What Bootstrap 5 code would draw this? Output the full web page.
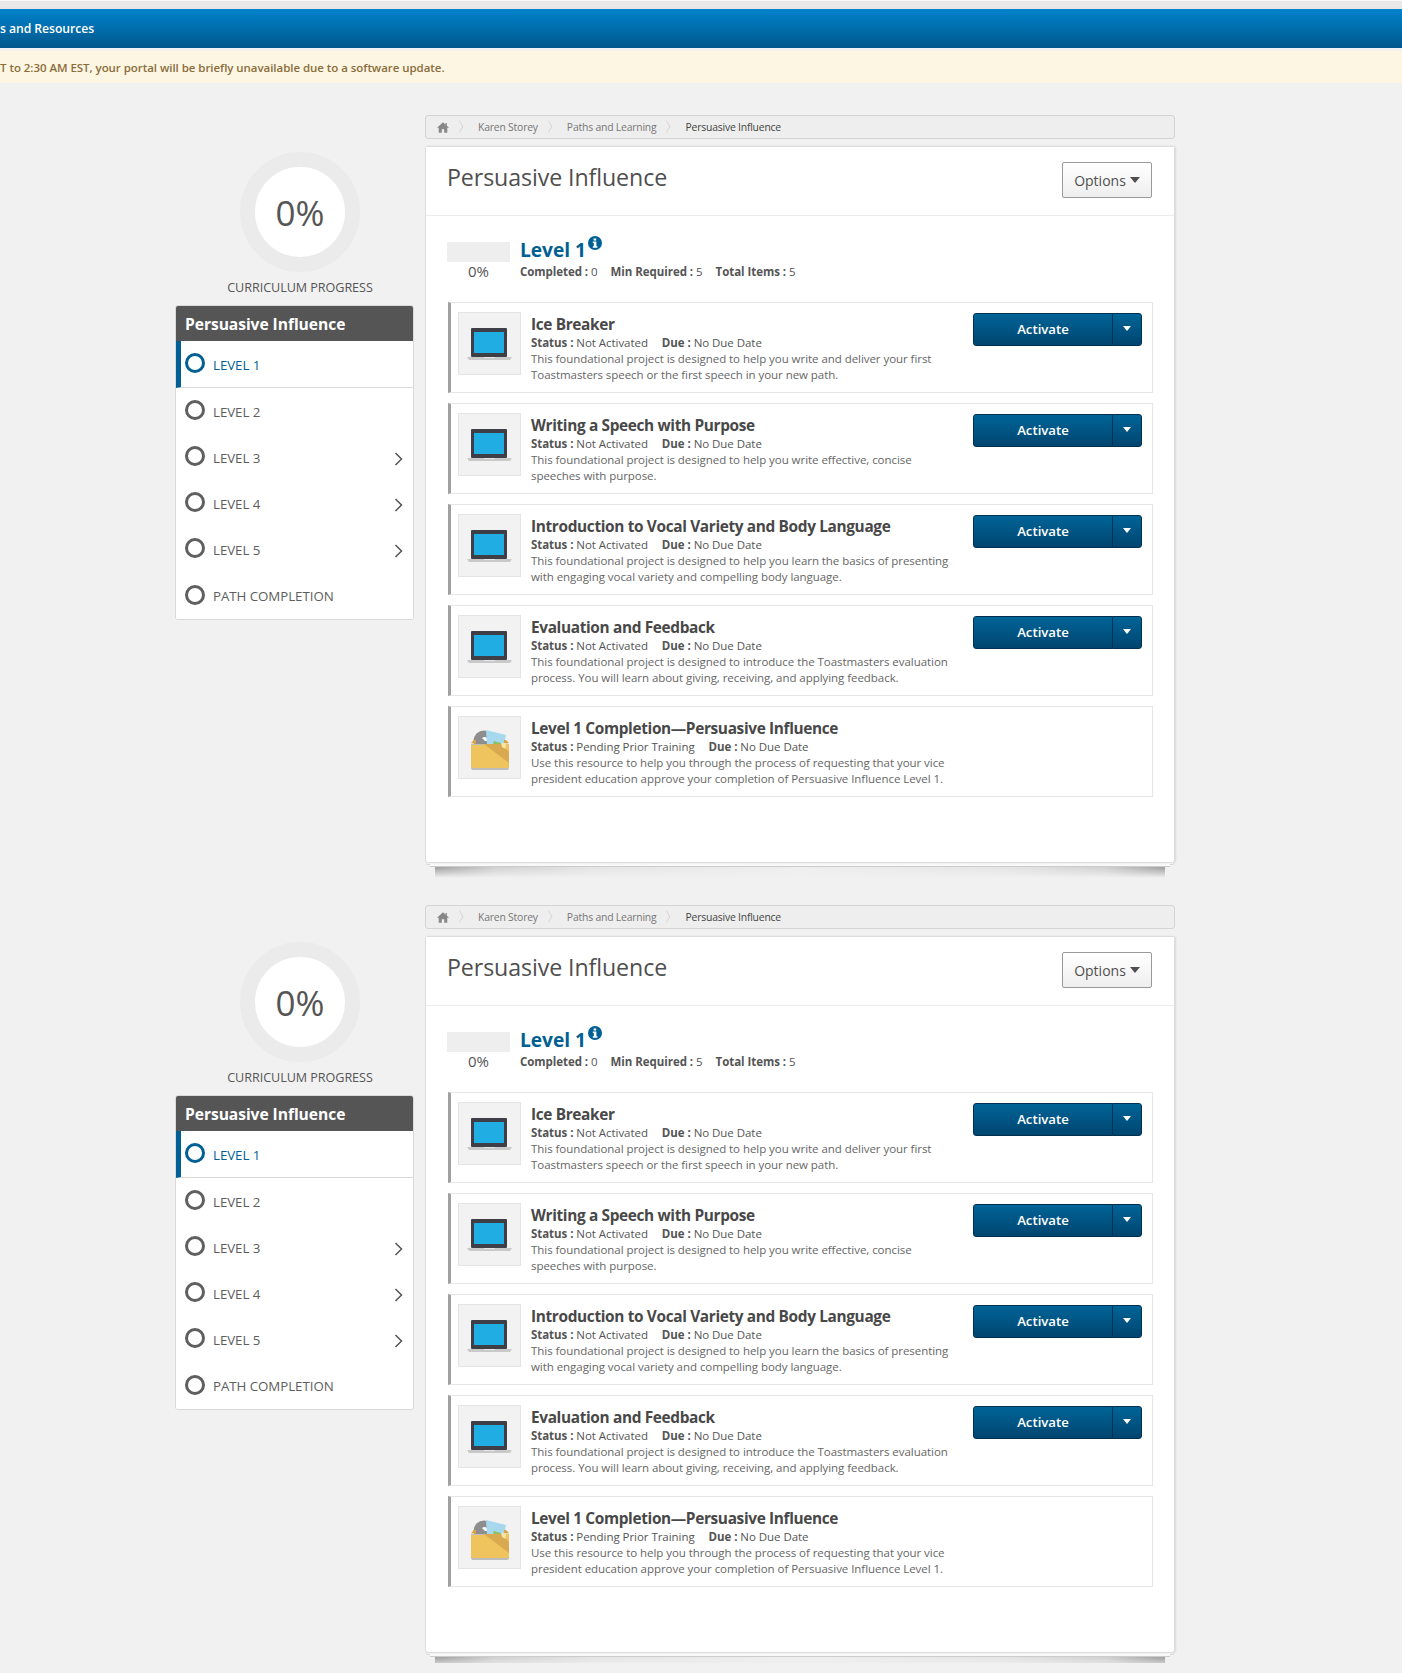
<!DOCTYPE html>
<html lang="en">
<head>
    <meta charset="UTF-8">
    <meta name="viewport" content="width=device-width, initial-scale=1.0">
    <title>Persuasive Influence</title>
    <link href="https://cdn.jsdelivr.net/npm/bootstrap@5.3.1/dist/css/bootstrap.min.css" rel="stylesheet">
    <style>
        body {
            background-color: #f1f1f1;
            color: #555555;
            font-family: "Open Sans", "Liberation Sans", sans-serif;
            font-size: 11.5px;
            letter-spacing: -.05px;
            overflow-x: hidden;
        }

        /* Top bars */
        .top-strip { height: 9px; background-color: #e8e8e8; border-top: 1px solid #f8f8f8; }
        .site-bar {
            height: 39px;
            margin-bottom: 3px;
            background: linear-gradient(#0083cc, #00578c);
            color: #ffffff;
            font-size: 12.2px;
            font-weight: 600;
            line-height: 39px;
        }
        .notice-bar {
            height: 32px;
            background-color: #fdf6e3;
            color: #8a6d3b;
            font-size: 11.5px;
            font-weight: 600;
            line-height: 33px;
        }

        /* Page blocks */
        .page-block { height: 790px; padding: 32px 0 0 175px; }
        .side-col { width: 250px; padding-top: 37px; flex: none; }
        .main-col { width: 750px; flex: none; }

        /* Progress ring */
        .ring {
            width: 120px;
            height: 120px;
            padding-top: 3px;
            border: 15px solid #ebebeb;
            border-radius: 50%;
            background-color: #ffffff;
            color: #555555;
            font-size: 35px;
        }
        .ring-label { margin: 7px 0 8px; font-size: 12.6px; color: #555555; line-height: 18px; }

        /* Side menu */
        .side-menu {
            width: 239px;
            border: 1px solid #d9d9d9;
            border-radius: 3px;
            background-color: #ffffff;
            overflow: hidden;
        }
        .side-head {
            height: 35px;
            padding-left: 9px;
            background-color: #555555;
            color: #ffffff;
            font-size: 15.6px;
            font-weight: 700;
            line-height: 36px;
        }
        .side-row {
            height: 46px;
            padding: 3px 10px 0 9px;
            border: 0;
            color: #5d5d5d;
            font-size: 13.3px;
        }
        .side-row:last-child { height: 47px; }
        .side-row.current {
            height: 47px;
            padding-left: 4px;
            border-left: 5px solid #005f94;
            border-bottom: 1px solid #d9d9d9;
            color: #005f94;
        }
        .side-dot {
            width: 20px;
            height: 20px;
            margin: 0 8px 5px 0;
            border: 3px solid #5f5f5f;
            border-radius: 50%;
        }
        .current .side-dot { border-color: #005f94; }

        /* Breadcrumb */
        .crumbs {
            height: 24px;
            margin: 0 0 7px;
            padding: 1px 11px 0;
            align-items: center;
            background-color: #eeeeee;
            border: 1px solid #d4d4d4;
            border-radius: 3px;
            font-size: 10.4px;
            letter-spacing: -.2px;
        }
        .crumbs .breadcrumb-item { color: #777777; padding-left: 0; }
        .crumbs .breadcrumb-item + .breadcrumb-item::before { display: none; }
        .crumbs .breadcrumb-item::after {
            content: "";
            display: inline-block;
            width: 9px;
            height: 9px;
            margin: 0 14px 0 6px;
            border-top: 1px solid #cfcfcf;
            border-right: 1px solid #cfcfcf;
            transform: scaleX(.6) rotate(45deg);
        }
        .crumbs .breadcrumb-item.active { color: #444444; }
        .crumbs .breadcrumb-item.active::after { display: none; }

        /* Main card and the paper stack under it */
        .path-card {
            position: relative;
            border: 1px solid #dddddd;
            border-radius: 3px;
            box-shadow: 1px 0 2px rgba(0, 0, 0, .1), 0 2px 0 -1px #f8f8f8, 0 3px 0 -1px #d6d6d6;
        }
        .path-card::before {
            content: "";
            position: absolute;
            left: 4px;
            right: 4px;
            top: calc(100% + 2px);
            height: 3px;
            background-color: #f8f8f8;
            border-bottom: 1px solid #cccccc;
        }
        .path-card::after {
            content: "";
            position: absolute;
            left: 9px;
            right: 9px;
            top: calc(100% + 5px);
            height: 11px;
            background: linear-gradient(90deg, #9c9c9c, #cfcfcf 8%, #e4e4e4 22%, #eeeeee 50%, #e4e4e4 78%, #cfcfcf 92%, #9c9c9c);
            -webkit-mask-image: linear-gradient(#000000, transparent);
            mask-image: linear-gradient(#000000, transparent);
        }
        .path-head {
            height: 69px;
            padding: 0 22px 0 21px;
            background-color: #ffffff;
            border-bottom: 1px solid #ececec;
        }
        .path-title { margin: 0 0 7px; font-size: 23.2px; font-weight: 400; color: #4f4f4f; letter-spacing: -.1px; }
        .options-btn {
            width: 90px;
            height: 36px;
            margin-bottom: 2px;
            padding: 0;
            background: linear-gradient(#ffffff, #eeeeee);
            border: 1px solid #999999;
            border-radius: 2px;
            color: #4f4f4f;
            font-size: 14px;
        }
        .options-btn::after { border-width: 6px 5px 0; vertical-align: 3px; margin-left: 4px; }
        .path-body { padding: 16px 21px 65px; }

        .level-row { height: 49px; margin-bottom: 21px; }
        .level-meter { width: 63px; margin-top: 10px; text-align: center; font-size: 15px; line-height: 19px; }
        .level-meter span { display: block; height: 20px; background-color: #eeeeee; }
        .level-title { margin: 0; font-size: 19.2px; font-weight: 700; color: #005f94; line-height: 24px; }
        .level-title svg { margin-left: -3px; vertical-align: 7px; }
        .level-info { margin-left: 10px; padding-top: 4px; }
        .level-stats { margin-top: 1px; font-size: 11.5px; line-height: 18px; }
        .level-stats b, .item-meta b { font-weight: 700; }
        .level-stats span { margin-right: 13px; }
        .item-meta span { margin-right: 11px; }

        /* Learning items */
        .path-item {
            height: 91px;
            margin: 0 0 10px 1px;
            padding: 9px 10px 0 7px;
            background-color: #ffffff;
            border: 1px solid #e6e6e6;
            border-left: 3px solid #a0a0a0;
        }
        .path-item:last-child { margin-bottom: 0; }
        .item-thumb {
            width: 63px;
            height: 63px;
            background-color: #f2f2f2;
            border: 1px solid #e4e4e4;
            flex: none;
        }
        .item-text { width: 420px; margin: 0 22px 0 10px; flex: none; color: #666666; line-height: 16px; }
        .item-title { margin: 3px 0 1px; font-size: 15.4px; font-weight: 700; color: #484848; line-height: 19px; letter-spacing: -.35px; white-space: nowrap; }
        .item-meta { color: #555555; }
        .activate-group { width: 169px; height: 33px; margin-top: 1px; }
        .activate-btn, .activate-caret {
            padding: 1px 0 0;
            background: linear-gradient(#006497, #004570);
            border: 1px solid #00304f;
            border-radius: 3px;
            color: #ffffff;
            font-size: 13.2px;
            font-weight: 600;
        }
        .activate-caret { width: 30px; flex: none !important; }
        .activate-caret::after { border-width: 5px 4.5px 0; vertical-align: 3px; }
    </style>
</head>
<body>
    <svg width="0" height="0" class="position-absolute">
        <symbol id="homeIcon" viewBox="0 0 14 12">
            <path d="M7 0 0 6.200h2V12h3.600V8h2.800v4H12V6.200h2L11.500 4V.8H10v1.900z" fill="#888888"/>
        </symbol>
        <symbol id="infoIcon" viewBox="0 0 14 14">
            <circle cx="7" cy="7" r="7" fill="#005f94"/>
            <path d="M5.600 2.400h2.600v2.200H5.600zM4.800 5.600h3.600v4.600h1v1.500H4.800v-1.500h1V7.100h-1z" fill="#ffffff"/>
        </symbol>
        <symbol id="laptopIcon" viewBox="0 0 45 32">
            <path d="M0 29h45l-2 3H2z" fill="#c9c9c9"/>
            <path d="M17 29h11v1H17z" fill="#e6e6e6"/>
            <rect x="4" y="0" width="36" height="29" rx="1" fill="#3e3e46"/>
            <rect x="7" y="4" width="30" height="21" fill="#1fade3"/>
        </symbol>
        <symbol id="folderIcon" viewBox="0 0 38 44">
            <circle cx="13" cy="15" r="10.500" fill="#8e8e8e"/>
            <path d="M13 11a4 4 0 0 1 4 4h-3l-3-3z" fill="#ffffff"/>
            <path d="M15 4 35 9l-3 14-16-4z" fill="#a7d8ee"/>
            <path d="M23 15l10 3-2 7-10-3z" fill="#8cc063"/>
            <path d="M0 17 3 14h2v4zM38 17l-3-3h-2v4z" fill="#d9a441"/>
            <path d="M0 18h38v24a2 2 0 0 1-2 2H2a2 2 0 0 1-2-2z" fill="#bdbdbd"/>
            <path d="M0 19h12l1-1h25v22a2 2 0 0 1-2 2H2a2 2 0 0 1-2-2z" fill="#efc45e"/>
            <path d="M13 18 38 37V26l-7-8z" fill="#d8a94e"/>
            <path d="M30 17h5l-.5 6-3.500-2z" fill="#f6e3a6"/>
        </symbol>
        <symbol id="chevIcon" viewBox="0 0 9 14">
            <path d="M1.500 1 7.500 7l-6 6" fill="none" stroke="#555555" stroke-width="1.500"/>
        </symbol>
    </svg>

    <div class="top-strip"></div>
    <div class="site-bar">s and Resources</div>
    <div class="notice-bar">T to 2:30 AM EST, your portal will be briefly unavailable due to a software update.</div>

    <section class="page-block d-flex">
        <aside class="side-col">
            <div class="text-center">
                <div class="ring d-flex align-items-center justify-content-center mx-auto">0%</div>
                <div class="ring-label">CURRICULUM PROGRESS</div>
            </div>
            <div class="side-menu">
                <div class="side-head">Persuasive Influence</div>
                <div class="list-group list-group-flush">
                    <div class="list-group-item side-row current d-flex align-items-center"><i class="side-dot"></i>LEVEL 1</div>
                    <div class="list-group-item side-row d-flex align-items-center"><i class="side-dot"></i>LEVEL 2</div>
                    <div class="list-group-item side-row d-flex align-items-center"><i class="side-dot"></i>LEVEL 3<svg class="ms-auto" width="9" height="14"><use href="#chevIcon"/></svg></div>
                    <div class="list-group-item side-row d-flex align-items-center"><i class="side-dot"></i>LEVEL 4<svg class="ms-auto" width="9" height="14"><use href="#chevIcon"/></svg></div>
                    <div class="list-group-item side-row d-flex align-items-center"><i class="side-dot"></i>LEVEL 5<svg class="ms-auto" width="9" height="14"><use href="#chevIcon"/></svg></div>
                    <div class="list-group-item side-row d-flex align-items-center"><i class="side-dot"></i>PATH COMPLETION</div>
                </div>
            </div>
        </aside>
        <main class="main-col">
            <ol class="breadcrumb crumbs">
                <li class="breadcrumb-item"><svg width="12" height="11"><use href="#homeIcon"/></svg></li>
                <li class="breadcrumb-item">Karen Storey</li>
                <li class="breadcrumb-item">Paths and Learning</li>
                <li class="breadcrumb-item active">Persuasive Influence</li>
            </ol>
            <div class="card path-card">
                <div class="path-head d-flex align-items-center justify-content-between">
                    <h1 class="path-title">Persuasive Influence</h1>
                    <button class="btn options-btn dropdown-toggle" type="button">Options</button>
                </div>
                <div class="path-body">
                    <div class="d-flex level-row">
                        <div class="level-meter"><span></span>0%</div>
                        <div class="level-info">
                            <h2 class="level-title">Level 1 <svg width="14" height="14"><use href="#infoIcon"/></svg></h2>
                            <div class="level-stats"><span><b>Completed :</b> 0</span><span><b>Min Required :</b> 5</span><span><b>Total Items :</b> 5</span></div>
                        </div>
                    </div>
                    <div class="path-item d-flex">
                        <div class="item-thumb d-flex align-items-center justify-content-center"><svg width="45" height="32"><use href="#laptopIcon"/></svg></div>
                        <div class="item-text">
                            <div class="item-title">Ice Breaker</div>
                            <div class="item-meta"><span><b>Status :</b> Not Activated</span> <span><b>Due :</b> No Due Date</span></div>
                            This foundational project is designed to help you write and deliver your first Toastmasters speech or the first speech in your new path.
                        </div>
                        <div class="btn-group activate-group">
                            <button class="btn activate-btn" type="button">Activate</button>
                            <button class="btn activate-caret dropdown-toggle dropdown-toggle-split" type="button"></button>
                        </div>
                    </div>
                    <div class="path-item d-flex">
                        <div class="item-thumb d-flex align-items-center justify-content-center"><svg width="45" height="32"><use href="#laptopIcon"/></svg></div>
                        <div class="item-text">
                            <div class="item-title">Writing a Speech with Purpose</div>
                            <div class="item-meta"><span><b>Status :</b> Not Activated</span> <span><b>Due :</b> No Due Date</span></div>
                            This foundational project is designed to help you write effective, concise speeches with purpose.
                        </div>
                        <div class="btn-group activate-group">
                            <button class="btn activate-btn" type="button">Activate</button>
                            <button class="btn activate-caret dropdown-toggle dropdown-toggle-split" type="button"></button>
                        </div>
                    </div>
                    <div class="path-item d-flex">
                        <div class="item-thumb d-flex align-items-center justify-content-center"><svg width="45" height="32"><use href="#laptopIcon"/></svg></div>
                        <div class="item-text">
                            <div class="item-title">Introduction to Vocal Variety and Body Language</div>
                            <div class="item-meta"><span><b>Status :</b> Not Activated</span> <span><b>Due :</b> No Due Date</span></div>
                            This foundational project is designed to help you learn the basics of presenting with engaging vocal variety and compelling body language.
                        </div>
                        <div class="btn-group activate-group">
                            <button class="btn activate-btn" type="button">Activate</button>
                            <button class="btn activate-caret dropdown-toggle dropdown-toggle-split" type="button"></button>
                        </div>
                    </div>
                    <div class="path-item d-flex">
                        <div class="item-thumb d-flex align-items-center justify-content-center"><svg width="45" height="32"><use href="#laptopIcon"/></svg></div>
                        <div class="item-text">
                            <div class="item-title">Evaluation and Feedback</div>
                            <div class="item-meta"><span><b>Status :</b> Not Activated</span> <span><b>Due :</b> No Due Date</span></div>
                            This foundational project is designed to introduce the Toastmasters evaluation process. You will learn about giving, receiving, and applying feedback.
                        </div>
                        <div class="btn-group activate-group">
                            <button class="btn activate-btn" type="button">Activate</button>
                            <button class="btn activate-caret dropdown-toggle dropdown-toggle-split" type="button"></button>
                        </div>
                    </div>
                    <div class="path-item d-flex">
                        <div class="item-thumb d-flex align-items-center justify-content-center"><svg width="38" height="44"><use href="#folderIcon"/></svg></div>
                        <div class="item-text">
                            <div class="item-title">Level 1 Completion—Persuasive Influence</div>
                            <div class="item-meta"><span><b>Status :</b> Pending Prior Training</span> <span><b>Due :</b> No Due Date</span></div>
                            Use this resource to help you through the process of requesting that your vice president education approve your completion of Persuasive Influence Level 1.
                        </div>
                    </div>
                </div>
            </div>
        </main>
    </section>

    <section class="page-block d-flex">
        <aside class="side-col">
            <div class="text-center">
                <div class="ring d-flex align-items-center justify-content-center mx-auto">0%</div>
                <div class="ring-label">CURRICULUM PROGRESS</div>
            </div>
            <div class="side-menu">
                <div class="side-head">Persuasive Influence</div>
                <div class="list-group list-group-flush">
                    <div class="list-group-item side-row current d-flex align-items-center"><i class="side-dot"></i>LEVEL 1</div>
                    <div class="list-group-item side-row d-flex align-items-center"><i class="side-dot"></i>LEVEL 2</div>
                    <div class="list-group-item side-row d-flex align-items-center"><i class="side-dot"></i>LEVEL 3<svg class="ms-auto" width="9" height="14"><use href="#chevIcon"/></svg></div>
                    <div class="list-group-item side-row d-flex align-items-center"><i class="side-dot"></i>LEVEL 4<svg class="ms-auto" width="9" height="14"><use href="#chevIcon"/></svg></div>
                    <div class="list-group-item side-row d-flex align-items-center"><i class="side-dot"></i>LEVEL 5<svg class="ms-auto" width="9" height="14"><use href="#chevIcon"/></svg></div>
                    <div class="list-group-item side-row d-flex align-items-center"><i class="side-dot"></i>PATH COMPLETION</div>
                </div>
            </div>
        </aside>
        <main class="main-col">
            <ol class="breadcrumb crumbs">
                <li class="breadcrumb-item"><svg width="12" height="11"><use href="#homeIcon"/></svg></li>
                <li class="breadcrumb-item">Karen Storey</li>
                <li class="breadcrumb-item">Paths and Learning</li>
                <li class="breadcrumb-item active">Persuasive Influence</li>
            </ol>
            <div class="card path-card">
                <div class="path-head d-flex align-items-center justify-content-between">
                    <h1 class="path-title">Persuasive Influence</h1>
                    <button class="btn options-btn dropdown-toggle" type="button">Options</button>
                </div>
                <div class="path-body">
                    <div class="d-flex level-row">
                        <div class="level-meter"><span></span>0%</div>
                        <div class="level-info">
                            <h2 class="level-title">Level 1 <svg width="14" height="14"><use href="#infoIcon"/></svg></h2>
                            <div class="level-stats"><span><b>Completed :</b> 0</span><span><b>Min Required :</b> 5</span><span><b>Total Items :</b> 5</span></div>
                        </div>
                    </div>
                    <div class="path-item d-flex">
                        <div class="item-thumb d-flex align-items-center justify-content-center"><svg width="45" height="32"><use href="#laptopIcon"/></svg></div>
                        <div class="item-text">
                            <div class="item-title">Ice Breaker</div>
                            <div class="item-meta"><span><b>Status :</b> Not Activated</span> <span><b>Due :</b> No Due Date</span></div>
                            This foundational project is designed to help you write and deliver your first Toastmasters speech or the first speech in your new path.
                        </div>
                        <div class="btn-group activate-group">
                            <button class="btn activate-btn" type="button">Activate</button>
                            <button class="btn activate-caret dropdown-toggle dropdown-toggle-split" type="button"></button>
                        </div>
                    </div>
                    <div class="path-item d-flex">
                        <div class="item-thumb d-flex align-items-center justify-content-center"><svg width="45" height="32"><use href="#laptopIcon"/></svg></div>
                        <div class="item-text">
                            <div class="item-title">Writing a Speech with Purpose</div>
                            <div class="item-meta"><span><b>Status :</b> Not Activated</span> <span><b>Due :</b> No Due Date</span></div>
                            This foundational project is designed to help you write effective, concise speeches with purpose.
                        </div>
                        <div class="btn-group activate-group">
                            <button class="btn activate-btn" type="button">Activate</button>
                            <button class="btn activate-caret dropdown-toggle dropdown-toggle-split" type="button"></button>
                        </div>
                    </div>
                    <div class="path-item d-flex">
                        <div class="item-thumb d-flex align-items-center justify-content-center"><svg width="45" height="32"><use href="#laptopIcon"/></svg></div>
                        <div class="item-text">
                            <div class="item-title">Introduction to Vocal Variety and Body Language</div>
                            <div class="item-meta"><span><b>Status :</b> Not Activated</span> <span><b>Due :</b> No Due Date</span></div>
                            This foundational project is designed to help you learn the basics of presenting with engaging vocal variety and compelling body language.
                        </div>
                        <div class="btn-group activate-group">
                            <button class="btn activate-btn" type="button">Activate</button>
                            <button class="btn activate-caret dropdown-toggle dropdown-toggle-split" type="button"></button>
                        </div>
                    </div>
                    <div class="path-item d-flex">
                        <div class="item-thumb d-flex align-items-center justify-content-center"><svg width="45" height="32"><use href="#laptopIcon"/></svg></div>
                        <div class="item-text">
                            <div class="item-title">Evaluation and Feedback</div>
                            <div class="item-meta"><span><b>Status :</b> Not Activated</span> <span><b>Due :</b> No Due Date</span></div>
                            This foundational project is designed to introduce the Toastmasters evaluation process. You will learn about giving, receiving, and applying feedback.
                        </div>
                        <div class="btn-group activate-group">
                            <button class="btn activate-btn" type="button">Activate</button>
                            <button class="btn activate-caret dropdown-toggle dropdown-toggle-split" type="button"></button>
                        </div>
                    </div>
                    <div class="path-item d-flex">
                        <div class="item-thumb d-flex align-items-center justify-content-center"><svg width="38" height="44"><use href="#folderIcon"/></svg></div>
                        <div class="item-text">
                            <div class="item-title">Level 1 Completion—Persuasive Influence</div>
                            <div class="item-meta"><span><b>Status :</b> Pending Prior Training</span> <span><b>Due :</b> No Due Date</span></div>
                            Use this resource to help you through the process of requesting that your vice president education approve your completion of Persuasive Influence Level 1.
                        </div>
                    </div>
                </div>
            </div>
        </main>
    </section>

    <script src="https://cdn.jsdelivr.net/npm/bootstrap@5.3.1/dist/js/bootstrap.bundle.min.js"></script>
</body>
</html>
